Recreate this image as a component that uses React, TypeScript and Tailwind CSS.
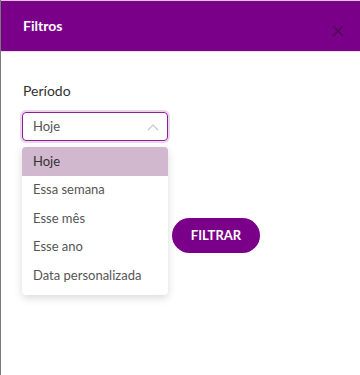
import React from "react";

export default function App() {
  const items = ["Hoje", "Essa semana", "Esse mês", "Esse ano", "Data personalizada"];
  return (
    <div
      className="w-[360px] h-[375px] bg-white border-l border-[#7a7a7a] overflow-hidden"
      style={{ fontFamily: "Lato, 'Noto Sans', sans-serif" }}
    >
      <div className="h-[52px] bg-[#7b0089] border-t border-[#e6c4de] border-b border-b-[#eadcea] flex items-center justify-between pl-[22px] pr-[16px]">
        <span className="text-white font-bold text-[14px] -mt-[2px]">Filtros</span>
        <svg width="12" height="12" viewBox="0 0 12 12" className="mt-[10px]">
          <path d="M1 1L11 11M11 1L1 11" stroke="#4b0a55" strokeWidth="1.3" fill="none" />
        </svg>
      </div>
      <div className="pl-[21px] pt-[30px]">
        <div className="text-[14px] text-[#333] leading-[18px] pl-[1px]">Período</div>
        <div className="relative w-[146px] mt-[12px]">
          <div className="h-[29px] rounded-[4px] border-[1.5px] border-[#8d1f9c] shadow-[0_0_0_2px_#ecd6ee] flex items-center justify-between pl-[10px] pr-[8px]">
            <span className="text-[13px] text-[#555]">Hoje</span>
            <svg width="12" height="8" viewBox="0 0 12 8">
              <path d="M1 7L6 2L11 7" stroke="#c8c8c8" strokeWidth="1.2" fill="none" />
            </svg>
          </div>
          <div className="absolute left-0 top-[35px] w-[146px] bg-white rounded-[4px] shadow-[0_3px_8px_rgba(0,0,0,0.15)] overflow-hidden z-10 pb-[5px]">
            {items.map((it, i) => (
              <div
                key={it}
                className={
                  i === 0
                    ? "h-[28.5px] flex items-center pl-[11px] text-[13px] text-[#333] bg-[#d1b8cf]"
                    : "h-[28.5px] flex items-center pl-[11px] text-[13px] text-[#555]"
                }
              >
                {it}
              </div>
            ))}
          </div>
        </div>
        <div className="mt-[77px] ml-[150px]">
          <button className="w-[88px] h-[35px] rounded-full bg-[#7b0089] text-white font-bold text-[13px]">
            FILTRAR
          </button>
        </div>
      </div>
    </div>
  );
}
